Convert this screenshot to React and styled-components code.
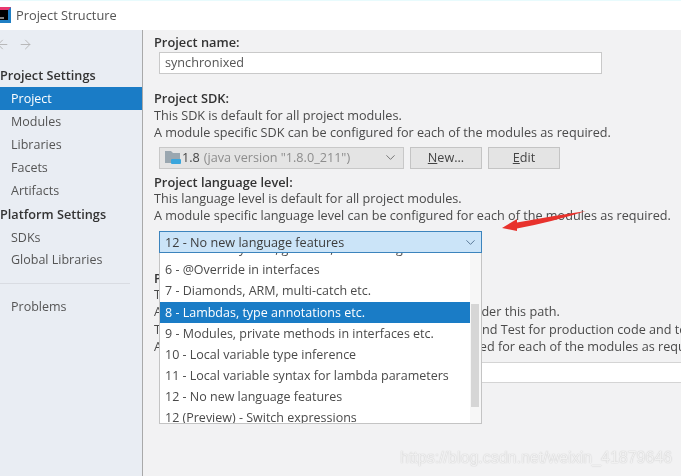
import React from "react";
import styled, { createGlobalStyle } from "styled-components";
import { ArrowLeft, ArrowRight, ChevronDown } from "lucide-react";

const languageLevels = [
	{ label: "5 - 'enum' keyword, generics, autoboxing etc." },
	{ label: "6 - @Override in interfaces" },
	{ label: "7 - Diamonds, ARM, multi-catch etc." },
	{ label: "8 - Lambdas, type annotations etc.", selected: true },
	{ label: "9 - Modules, private methods in interfaces etc." },
	{ label: "10 - Local variable type inference" },
	{ label: "11 - Local variable syntax for lambda parameters" },
	{ label: "12 - No new language features" },
	{ label: "12 (Preview) - Switch expressions" },
];

function App() {
	return (
		<Window>
			<GlobalStyle />
			<TitleBar>
				<Logo width="16" height="16" viewBox="0 0 16 16">
					<rect x="0" y="0" width="16" height="16" fill="#1f7fc4" />
					<path d="M0 0h16L9 8 0 16z" fill="#e8386f" />
					<rect x="3" y="3" width="10" height="10" fill="#000" />
					<rect x="4" y="10.5" width="5" height="1" fill="#fff" />
				</Logo>
				<Title>Project Structure</Title>
			</TitleBar>
			<Body>
				<Sidebar>
					<NavArrows>
						<ArrowLeft size={15} strokeWidth={1.5} />
						<ArrowRight size={15} strokeWidth={1.5} />
					</NavArrows>
					<SideHeading $top={5}>Project Settings</SideHeading>
					<SideItem $active>Project</SideItem>
					<SideItem>Modules</SideItem>
					<SideItem>Libraries</SideItem>
					<SideItem>Facets</SideItem>
					<SideItem>Artifacts</SideItem>
					<SideHeading $top={1}>Platform Settings</SideHeading>
					<SideItem>SDKs</SideItem>
					<SideItem $height={22}>Global Libraries</SideItem>
					<SideDivider />
					<SideItem>Problems</SideItem>
				</Sidebar>
				<Main>
					<Label>Project name:</Label>
					<NameInput>synchronixed</NameInput>

					<Label $top={16}>Project SDK:</Label>
					<Text>This SDK is default for all project modules.</Text>
					<Text>A module specific SDK can be configured for each of the modules as required.</Text>
					<SdkRow>
						<SdkCombo>
							<FolderIcon width="16" height="15" viewBox="0 0 16 15">
								<path d="M0 1h6l2 2h7v10H0z" fill="#9aa7b0" />
								<rect x="6" y="9" width="10" height="5" rx="1" fill="#3aa6dd" />
							</FolderIcon>
							<SdkVersion>1.8</SdkVersion>
							<SdkDetail>(java version "1.8.0_211")</SdkDetail>
							<ComboArrow size={15} strokeWidth={1.4} color="#666" />
						</SdkCombo>
						<Button $width={72}><u>N</u>ew...</Button>
						<Button $width={72}><u>E</u>dit</Button>
					</SdkRow>

					<Label $top={4.5}>Project language level:</Label>
					<Text>This language level is default for all project modules.</Text>
					<Text>A module specific language level can be configured for each of the modules as required.</Text>

					<LevelArea>
						<LevelCombo>
							<span>12 - No new language features</span>
							<ComboArrow size={15} strokeWidth={1.4} color="#4a6a8a" />
						</LevelCombo>
						<Dropdown>
							<DropdownList>
								{languageLevels.map((level) => (
									<Option key={level.label} $selected={level.selected}>{level.label}</Option>
								))}
							</DropdownList>
							<ScrollTrack>
								<ScrollThumb />
							</ScrollTrack>
						</Dropdown>
					</LevelArea>

					<Label $top={16.5}>Project compiler output:</Label>
					<Text>This path is used to store all project compilation results.</Text>
					<Text>A directory corresponding to each module is created under this path.</Text>
					<Text>This directory contains two subdirectories: Production and Test for production code and test code, respectively.</Text>
					<Text>A module specific compiler output path can be configured for each of the modules as required.</Text>
					<OutputInput />
				</Main>
			</Body>
			<Arrow width="90" height="24" viewBox="0 0 90 24">
				<path d="M0 20 L15 11 L15 14.5 Q50 8 84 3 Q50 14 15 20.5 L15 23 Z" fill="#e8322c" />
			</Arrow>
			<Watermark>https://blog.csdn.net/weixin_41879646</Watermark>
		</Window>
	);
}

export default App;

const GlobalStyle = createGlobalStyle`
	html, body {
		margin: 0;
		padding: 0;
		background: #f2f2f3;
	}
	* {
		box-sizing: border-box;
	}
`;

const Window = styled.div`
	position: relative;
	width: 681px;
	height: 476px;
	overflow: hidden;
	font-family: "Open Sans", "Noto Sans", sans-serif;
	font-size: 12.65px;
	color: #3c3c3c;
	background: #f2f2f3;
	filter: blur(0.35px);
`;

const TitleBar = styled.div`
	height: 30px;
	background: #ffffff;
	box-shadow: inset 0 1px 0 #e8fbfd;
	display: flex;
	align-items: center;
	gap: 5px;
	margin-left: -5px;
`;

const Logo = styled.svg`
	flex: none;
`;

const Title = styled.div`
	font-size: 12.8px;
	color: #555;
`;

const Body = styled.div`
	display: flex;
	height: 446px;
`;

const Sidebar = styled.div`
	width: 143px;
	flex: none;
	background: #e9edf3;
	border-right: 1px solid #a9a9a9;
	display: flex;
	flex-direction: column;
	font-size: 12.5px;
`;

const NavArrows = styled.div`
	height: 29px;
	display: flex;
	align-items: center;
	gap: 8px;
	margin-left: -5px;
	color: #b4b4b4;
`;

const SideHeading = styled.div`
	height: 23px;
	line-height: 23px;
	margin-top: ${(p) => p.$top}px;
	font-size: 12.7px;
	font-weight: 600;
	color: #333;
`;

const SideItem = styled.div`
	height: ${(p) => p.$height || 23}px;
	line-height: ${(p) => p.$height || 23}px;
	padding-left: 11px;
	color: ${(p) => (p.$active ? "#ffffff" : "#555")};
	background: ${(p) => (p.$active ? "#1a7cc6" : "transparent")};
`;

const SideDivider = styled.div`
	height: 1px;
	margin: 12px 12px 11px 0;
	background: #d9dce2;
`;

const Main = styled.div`
	flex: 1;
	min-width: 0;
	padding: 4px 0 0 11px;
	white-space: nowrap;
`;

const Label = styled.div`
	height: 16.5px;
	line-height: 16.5px;
	font-size: 12.8px;
	font-weight: 600;
	color: #333;
	margin-top: ${(p) => p.$top || 0}px;
`;

const Text = styled.div`
	height: 17.3px;
	line-height: 17.3px;
	color: #4a4a4a;
`;

const NameInput = styled.div`
	width: 443px;
	height: 22px;
	line-height: 19px;
	margin: 1.5px 0 0 5px;
	padding-left: 5px;
	background: #fff;
	border: 1px solid #c9c9c9;
	color: #555;
`;

const SdkRow = styled.div`
	display: flex;
	gap: 6px;
	margin: 5.5px 0 0 5px;
`;

const SdkCombo = styled.div`
	width: 245px;
	height: 22.5px;
	display: flex;
	align-items: center;
	padding: 0 5px 1px;
	background: #e4e4e4;
	border: 1px solid #c8c8c8;
`;

const FolderIcon = styled.svg`
	flex: none;
	margin-right: 1px;
`;

const SdkVersion = styled.span`
	color: #444;
	margin-right: 4px;
`;

const SdkDetail = styled.span`
	color: #8d8d8d;
`;

const ComboArrow = styled(ChevronDown)`
	margin-left: auto;
	flex: none;
`;

const Button = styled.div`
	width: ${(p) => p.$width}px;
	height: 22.5px;
	line-height: 19px;
	text-align: center;
	background: #e4e4e4;
	border: 1px solid #c4c4c4;
	color: #444;
`;

const LevelArea = styled.div`
	position: relative;
	width: 323px;
	height: 22px;
	margin: 6.4px 0 0 5px;
`;

const LevelCombo = styled.div`
	height: 22px;
	display: flex;
	align-items: center;
	padding: 0 3px 0 5px;
	background: #cbe4f8;
	border: 1px solid #3c84bd;
	color: #3c3c3c;
`;

const Dropdown = styled.div`
	position: absolute;
	z-index: 2;
	top: 22px;
	left: 0;
	width: 323px;
	height: 171px;
	display: flex;
	background: #fff;
	border: 1px solid #c4c4c4;
	border-top: 0;
	overflow: hidden;
	font-size: 12.5px;
`;

const DropdownList = styled.div`
	width: 310px;
	flex: none;
	margin-top: -15px;
`;

const Option = styled.div`
	height: 21.15px;
	line-height: 21.15px;
	padding-left: 5px;
	color: ${(p) => (p.$selected ? "#ffffff" : "#4a4a4a")};
	background: ${(p) => (p.$selected ? "#1a7cc6" : "transparent")};
`;

const ScrollTrack = styled.div`
	flex: 1;
	display: flex;
	flex-direction: column;
	background: #f7f7f7;
`;

const ScrollThumb = styled.div`
	margin-top: 51px;
	height: 103px;
	width: 8px;
	margin-left: 1px;
	background: #d6d6d6;
`;

const OutputInput = styled.div`
	height: 21px;
	margin-top: 7px;
	margin-left: 5px;
	background: #fff;
	border-top: 1px solid #d4d4d4;
	border-bottom: 1px solid #d4d4d4;
`;

const Arrow = styled.svg`
	position: absolute;
	z-index: 3;
	left: 502px;
	top: 208px;
`;

const Watermark = styled.div`
	position: absolute;
	z-index: 3;
	left: 400px;
	top: 449px;
	font-family: "Liberation Sans", sans-serif;
	font-size: 16px;
	color: rgba(255, 255, 255, 0.8);
	text-shadow: 0 0 1px rgba(110, 110, 110, 0.5);
	white-space: nowrap;
`;
